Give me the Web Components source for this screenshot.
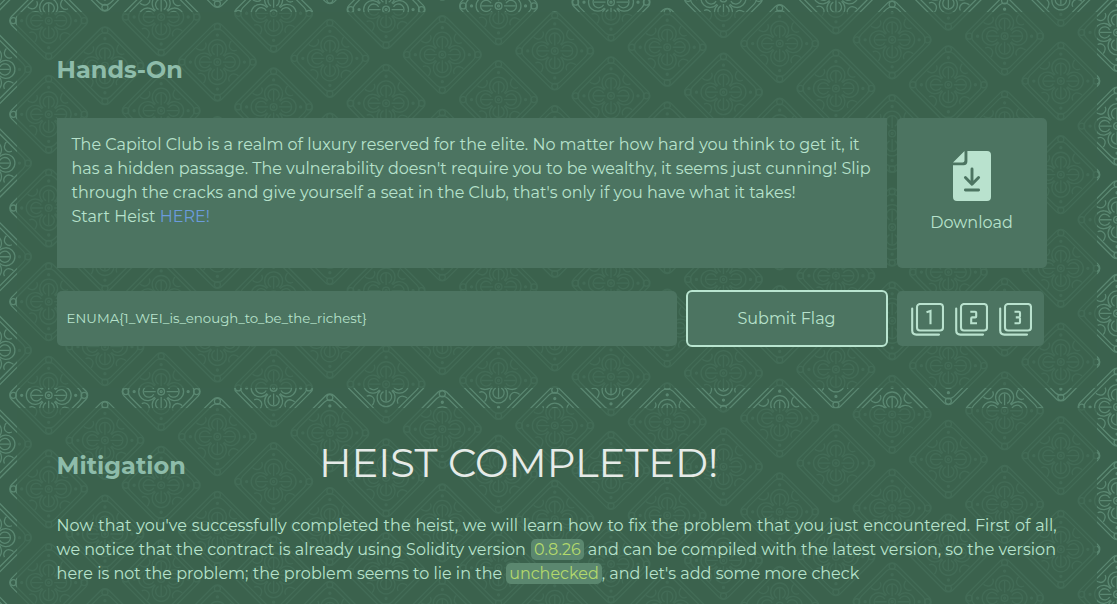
<!DOCTYPE html>
<html lang="en"><head><meta charset="utf-8"><title>Heist</title>
<style>
html,body{margin:0;height:100%;overflow:hidden;background:#3b624e}
body{font-family:Montserrat,Inter,sans-serif;color:#b7e2cc}
</style></head><body>
<heist-page></heist-page>
<script>
const define=(name,html,setup)=>customElements.define(name,class extends HTMLElement{
  connectedCallback(){
    if(this.shadowRoot)return;
    this.attachShadow({mode:'open'}).innerHTML=html;
    if(setup)setup.call(this,this.shadowRoot);
  }
});

// One unbroken line; with a measure, its words are justified to it
define('text-line',`<style>:host{display:block;white-space:nowrap}</style><slot></slot>`,function(){
  const w=this.getAttribute('w');
  if(w){this.style.width=w+'px';this.style.whiteSpace='normal';this.style.height='24px';
    this.style.textAlign='justify';this.style.textAlignLast='justify';}
});

// Diamond ornament wallpaper
define('ornament-field',`<style>:host{display:block;position:absolute;inset:0;z-index:0}svg{display:block}</style>
<svg width="1117" height="604" fill="none" stroke="#5a8771" stroke-width="1.3"><defs><g id="d">
<rect x="-29.3" y="-29.3" width="58.6" height="58.6" rx="6" transform="rotate(45)"/>
<rect x="-25.7" y="-25.7" width="51.4" height="51.4" rx="8" transform="rotate(45)"/>
<circle r="3.4"/><circle r="1"/>
<g id="q"><circle cy="-35.4" r="3"/><circle cy="-27" r="1" fill="#5a8771"/>
<path d="M-5.6-6.4A9 9 0 1 1 5.6-6.4M-2.6-7.4A5.6 5.6 0 1 1 2.6-7.4M0-5.5V-17"/>
<path d="M12.4-18.4A5 5 0 0 0 19.4-12M12.4-18.4Q12.7-20 14-21"/></g>
<use href="#q" transform="rotate(90)"/><use href="#q" transform="rotate(180)"/><use href="#q" transform="rotate(270)"/>
</g></defs><g id="all"></g></svg>`,function(r){
  let out='';
  for(let c=-1;c<=20;c++)for(let k=-2;k<8;k++)
    out+='<use href="#d" x="'+(48.7+c*56.23).toFixed(2)+'" y="'+(20.7-c*1.85+(Math.abs(c)%2)*46.9+k*93.65).toFixed(2)+'"/>';
  r.querySelector('#all').innerHTML=out;
});

define('page-section',`<style>:host{display:block;flex:none;overflow:hidden;box-sizing:border-box;width:1080px;background:rgba(59,98,78,.76);padding:0 40px}
h2{margin:0;margin-left:-.5px;font-size:24px;line-height:30px;font-weight:700;color:#8ebcaa}</style><h2><slot name="title"></slot></h2><slot></slot>`);

define('soft-panel',`<style>:host{display:flex;box-sizing:border-box;background:#4c7461;border-radius:5px}</style><slot></slot>`);

define('file-icon',`<style>:host{display:block;width:38px;height:50px}svg{display:block}</style>
<svg width="38" height="50" viewBox="0 0 38 50"><path fill="#b9e2ce" d="M14.4 0H34q4 0 4 4V46q0 4-4 4H4q-4 0-4-4V14.2H10.5q3.9 0 3.9-3.9ZM0 11.5 11.5 0V9.5q0 2-2 2Z"/><path d="M19 18V33M12.4 26.5 19 33.3 25.6 26.5M12.4 39H25.6" fill="none" stroke="#4c7461" stroke-width="2.9" stroke-linecap="round" stroke-linejoin="round"/></svg>`);

define('hint-icon',`<style>:host{display:block;width:33px;height:33px}svg{display:block}path,rect{fill:none;stroke:#b9e2ce;stroke-width:2.1}</style>
<svg width="33" height="33" viewBox="0 0 33 33"><rect x="6" y="1" width="26" height="26.5" rx="3"/><path stroke-linecap="round" d="M1.2 5.5V27.5Q1.2 31.6 5.4 31.6H28"/><path class="n"/></svg>`,function(r){
  r.querySelector('.n').setAttribute('d',{1:'M15.5 9.2 19.5 8V21.2',2:'M15.3 8.8H20.2Q21.2 8.8 21.2 9.8V13.6Q21.2 14.4 20.2 14.4H17.2Q16.2 14.4 16.2 15.4V20.2H22',3:'M15.5 8.8H20Q21 8.8 21 9.8V13.2Q21 14.4 19.5 14.4H16.8M19.5 14.4Q21 14.4 21 15.6V19.2Q21 20.2 20 20.2H15.5'}[this.getAttribute('n')]);
});

define('code-chip',`<style>:host{display:inline-block;box-sizing:border-box;height:21px;line-height:21px;padding:0 3px;border-radius:5px;background:#5b876f;color:#b3d96c}</style><slot></slot>`);

define('flag-button',`<style>:host{display:flex}button{font:inherit;color:inherit;line-height:24px;width:202px;height:57px;padding:0 1px 0 0;box-sizing:border-box;background:#4c7461;border:2px solid #b9e5d0;border-radius:6px}</style><button><slot></slot></button>`);

define('heist-page',`<style>
:host{display:block;position:relative;height:604px;overflow:hidden;font-size:16px;line-height:24px}
main{position:relative;padding-left:17px;display:flex;flex-direction:column;gap:20px}
.top{height:12px;width:1080px;margin-bottom:-20px}
.hands{height:376px;padding-top:43px}
.miti{height:216px;padding-top:43px}
.row{display:flex;gap:10px;margin-top:33px}
.desc{width:830px;height:150px;border-radius:0;padding:15px 14.4px;flex-direction:column}
.dl{width:150px;height:150px;flex-direction:column;align-items:center;padding-top:33px}
.dl text-line{margin-top:10px;margin-left:-1px}
.row.two{gap:9px;margin-top:22px;align-items:center}
.flag{width:620px;height:55px;align-items:center;padding:0 0 2px 9.6px;font-size:13.333px}
.hints{width:147px;height:55px;padding:12px 0 0 14px;gap:11px}
.line{display:flex;height:24px}
a{color:#6b9bdc;text-decoration:none}
.para{margin:33px 0 0 -.4px}
.toast{position:absolute;left:319px;top:439px;font-size:40px;line-height:48px;font-weight:400;color:#e6ebe8}
code-chip{margin:1px 4px 0 5px}
code-chip.last{margin:1px 0 0 4px}
</style>
<ornament-field></ornament-field>
<main>
<div class="top"></div>
<page-section class="hands"><text-line slot="title">Hands-On</text-line>
 <div class="row"><soft-panel class="desc">
  <text-line>The Capitol Club is a realm of luxury reserved for the elite. No matter how hard you think to get it, it</text-line>
  <text-line>has a hidden passage. The vulnerability doesn't require you to be wealthy, it seems just cunning! Slip</text-line>
  <text-line>through the cracks and give yourself a seat in the Club, that's only if you have what it takes!</text-line>
  <text-line>Start Heist <a>HERE!</a></text-line></soft-panel>
 <soft-panel class="dl"><file-icon></file-icon><text-line>Download</text-line></soft-panel></div>
 <div class="row two"><soft-panel class="flag"><text-line>ENUMA{1_WEI_is_enough_to_be_the_richest}</text-line></soft-panel>
 <flag-button><text-line>Submit Flag</text-line></flag-button>
 <soft-panel class="hints"><hint-icon n="1"></hint-icon><hint-icon n="2"></hint-icon><hint-icon n="3"></hint-icon></soft-panel></div>
</page-section>
<page-section class="miti"><text-line slot="title">Mitigation</text-line>
 <div class="para">
 <text-line w="1000">Now that you've successfully completed the heist, we will learn how to fix the problem that you just encountered. First of all,</text-line>
 <div class="line"><text-line style="width:469.5px">we notice that the contract is already using Solidity version</text-line><code-chip>0.8.26</code-chip><text-line>and can be compiled with the latest version, so the version</text-line></div>
 <div class="line"><text-line>here is not the problem; the problem seems to lie in the</text-line><code-chip class="last">unchecked</code-chip><text-line>, and let's add some more check</text-line></div>
 </div>
</page-section>
</main>
<div class="toast"><text-line>HEIST COMPLETED!</text-line></div>`);
</script></body></html>
